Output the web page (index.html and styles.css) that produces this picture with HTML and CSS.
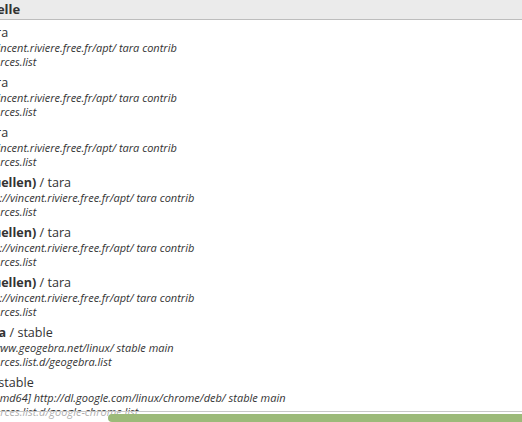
FILE: index.html
```html
<!DOCTYPE html>
<html lang="de">
<head>
  <meta charset="UTF-8" />
  <title>Quellen</title>
  <link rel="stylesheet" href="styles.css">
</head>
<body>
  <div class="view">
    <div class="content">
      <div class="header"><span class="col">Quelle</span></div>
      <div class="list">
        <div class="row">
          <div class="title"><b>Mint</b> / tara</div>
          <div class="line">deb http://vincent.riviere.free.fr/apt/ tara contrib</div>
          <div class="line">/etc/apt/sources.list</div>
        </div>
        <div class="row">
          <div class="title"><b>Mint</b> / tara</div>
          <div class="line">deb http://vincent.riviere.free.fr/apt/ tara contrib</div>
          <div class="line">/etc/apt/sources.list</div>
        </div>
        <div class="row">
          <div class="title"><b>Mint</b> / tara</div>
          <div class="line">deb http://vincent.riviere.free.fr/apt/ tara contrib</div>
          <div class="line">/etc/apt/sources.list</div>
        </div>
        <div class="row">
          <div class="title"><b>Atari (Quellen)</b> / tara</div>
          <div class="line">deb-src http://vincent.riviere.free.fr/apt/ tara contrib</div>
          <div class="line">/etc/apt/sources.list</div>
        </div>
        <div class="row">
          <div class="title"><b>Atari (Quellen)</b> / tara</div>
          <div class="line">deb-src http://vincent.riviere.free.fr/apt/ tara contrib</div>
          <div class="line">/etc/apt/sources.list</div>
        </div>
        <div class="row">
          <div class="title"><b>Atari (Quellen)</b> / tara</div>
          <div class="line">deb-src http://vincent.riviere.free.fr/apt/ tara contrib</div>
          <div class="line">/etc/apt/sources.list</div>
        </div>
        <div class="row">
          <div class="title"><b>GeoGebra</b> / stable</div>
          <div class="line">deb http://www.geogebra.net/linux/ stable main</div>
          <div class="line">/etc/apt/sources.list.d/geogebra.list</div>
        </div>
        <div class="row">
          <div class="title"><b>Google</b> / stable</div>
          <div class="line">deb [arch=amd64] http://dl.google.com/linux/chrome/deb/ stable main</div>
          <div class="line">/etc/apt/sources.list.d/google-chrome.list</div>
        </div>
      </div>
    </div>
    <div class="hscroll"><div class="thumb"></div></div>
  </div>
</body>
</html>
```

FILE: styles.css
```css
body {
  margin: 0;
  font-family: 'Open Sans', 'Liberation Sans', sans-serif;
  color: #333;
  background: #fff;
}
.view {
  position: relative;
  width: 522px;
  height: 422px;
  overflow: hidden;
}
.content {
  margin-left: -59px;
}
.header {
  height: 19px;
  background: #ebebeb;
  border-bottom: 1px solid #bdbdbd;
  font-size: 13px;
  font-weight: bold;
  line-height: 19px;
}
.header .col {
  padding-left: 37px;
}
.list {
  padding-top: 3px;
}
.row {
  height: 50px;
  white-space: nowrap;
}
.title {
  font-size: 12.6px;
  line-height: 17px;
  padding: 1px 0 0 3px;
}
.line {
  font-size: 11px;
  font-style: italic;
  line-height: 14px;
}
.hscroll {
  position: absolute;
  left: 0;
  right: 0;
  bottom: 0;
  height: 10px;
  border-top: 1px solid #c8c8c8;
  background: rgba(255, 255, 255, 0.6);
}
.thumb {
  margin: 2px 0 0 108px;
  height: 8px;
  background: #9cba79;
  border-radius: 4px 0 0 4px;
}
```
